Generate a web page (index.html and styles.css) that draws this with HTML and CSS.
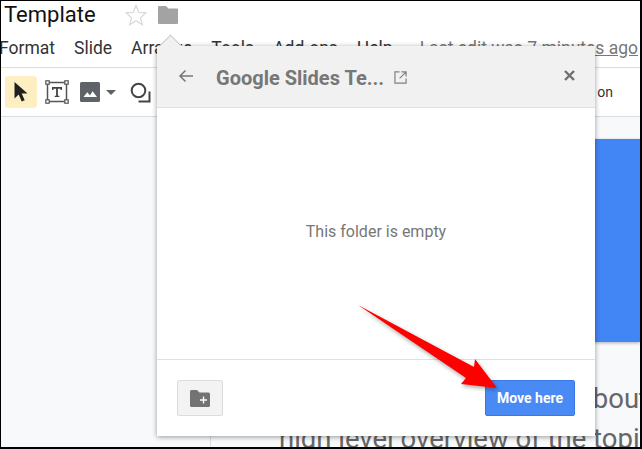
FILE: index.html
```html
<!DOCTYPE html>
<html lang="en">
<head>
    <meta charset="UTF-8">
    <title>Template</title>
    <link rel="stylesheet" href="styles.css">
</head>
<body>
    <div class="app">
        <div class="title-row">
            <span class="doc-title">Template</span>
            <svg class="star" width="24" height="24" viewBox="0 0 24 24"><path d="M12 2.500l2.800 6.900 7.200.5-5.500 4.700 1.800 7.200-6.300-4-6.300 4 1.800-7.200L2 9.900l7.200-.5z" fill="none" stroke="#dadada" stroke-width="1.300"/></svg>
            <svg class="folder" width="20" height="18" viewBox="0 0 20 18"><path d="M0 1a1 1 0 0 1 1-1h7l2.500 2.500H19a1 1 0 0 1 1 1V17a1 1 0 0 1-1 1H1a1 1 0 0 1-1-1z" fill="#a3a3a3"/></svg>
        </div>
        <div class="menu-row">
            <span>Format</span>
            <span>Slide</span>
            <span>Arrange</span>
            <span>Tools</span>
            <span>Add-ons</span>
            <span>Help</span>
            <span class="last-edit">Last edit was 7 minutes ago</span>
        </div>
        <div class="toolbar">
            <div class="tool-active">
                <svg width="16" height="22" viewBox="0 0 16 22"><path d="M1.500 1v16.500l4.200-4 3 7 3-1.300-3-6.700h5.800z" fill="#202020"/></svg>
            </div>
            <svg class="tool-text" width="24" height="24" viewBox="0 0 24 24"><rect x="2.500" y="2.500" width="19" height="19" fill="none" stroke="#555" stroke-width="1.500"/><path d="M7 7h10v3h-1.500V8.700h-2.600v7h1.400V17H9.700v-1.300h1.400v-7H8.500V10H7z" fill="#444"/><g fill="#fff" stroke="#555" stroke-width="1.200"><rect x=".8" y=".8" width="3.400" height="3.400"/><rect x="19.800" y=".8" width="3.400" height="3.400"/><rect x=".8" y="19.800" width="3.400" height="3.400"/><rect x="19.800" y="19.800" width="3.400" height="3.400"/></g></svg>
            <svg class="tool-image" width="20" height="20" viewBox="0 0 20 20"><path d="M1.500 0h17A1.500 1.500 0 0 1 20 1.500v17a1.500 1.500 0 0 1-1.500 1.500h-17A1.500 1.500 0 0 1 0 18.500v-17A1.500 1.500 0 0 1 1.500 0z" fill="#5f6368"/><path d="M3.500 15l3.800-4.800 2.700 3.200 2.600-4.100 4.400 5.700z" fill="#fff"/></svg>
            <svg class="tool-caret" width="10" height="5" viewBox="0 0 10 5"><path d="M0 0h10L5 5z" fill="#5f6368"/></svg>
            <svg class="tool-shape" width="21" height="21" viewBox="0 0 21 21"><circle cx="8.500" cy="8.500" r="6.800" fill="none" stroke="#444" stroke-width="2"/><path d="M19.500 9.500V19.500H8.500" fill="none" stroke="#444" stroke-width="2"/></svg>
            <span class="tool-label">on</span>
        </div>
        <div class="workspace">
            <div class="filmstrip"></div>
            <div class="canvas">
                <div class="slide-banner"></div>
                <p class="slide-text">This Presentation walks about<br>high level overview of the topic</p>
            </div>
        </div>
    </div>

    <div class="popover">
        <div class="pop-head">
            <svg class="pop-back" width="16" height="14" viewBox="0 0 16 14"><path d="M15 7H2M7.500 1.500L2 7l5.500 5.500" fill="none" stroke="#777" stroke-width="1.500"/></svg>
            <span class="pop-title">Google Slides Te...</span>
            <svg class="pop-open" width="13" height="13" viewBox="0 0 14 14"><path d="M6 1H1v12h12V8M8 1h5v5M13 1L6 8" fill="none" stroke="#808080" stroke-width="1.300"/></svg>
            <svg class="pop-close" width="11" height="11" viewBox="0 0 11 11"><path d="M1 1l9 9M10 1l-9 9" stroke="#6f6f6f" stroke-width="2.400"/></svg>
        </div>
        <div class="pop-body">This folder is empty</div>
        <div class="pop-foot">
            <button class="btn-folder">
                <svg width="20" height="17" viewBox="0 0 20 17"><path d="M0 1.500A1.500 1.500 0 0 1 1.500 0H7l2.500 2.500h9A1.500 1.500 0 0 1 20 4v11.500a1.500 1.500 0 0 1-1.500 1.500h-17A1.500 1.500 0 0 1 0 15.500z" fill="#737373"/><path d="M13.500 6.500v7M10 10h7" stroke="#fff" stroke-width="1.300"/></svg>
            </button>
            <button class="btn-move">Move here</button>
        </div>
    </div>

    <svg class="arrow" width="140" height="84" viewBox="0 0 140 84"><path d="M0 0L116 62 117 54 139 83 103 79 108 73z" fill="#f00"/></svg>
</body>
</html>
```

FILE: styles.css
```css
* {
    box-sizing: border-box;
}

body {
    margin: 0;
    width: 642px;
    height: 449px;
    overflow: hidden;
    position: relative;
    background: #fff;
    font-family: Roboto, "Liberation Sans", sans-serif;
}

.app {
    height: 449px;
    border: 1px solid #000;
    border-width: 1px 2px 2px 1px;
    display: flex;
    flex-direction: column;
    overflow: hidden;
}

/* Title row */
.title-row {
    height: 27px;
    display: flex;
    align-items: center;
    padding-left: 3px;
    color: #111;
}

.doc-title {
    font-size: 22px;
    width: 120px;
}

.star {
    margin-right: 10px;
}

/* Menu row */
.menu-row {
    height: 40px;
    margin-left: -2px;
    display: flex;
    align-items: center;
    gap: 19px;
    font-size: 17.500px;
    color: #333;
    white-space: nowrap;
    border-bottom: 1px solid #dadce0;
}

.last-edit {
    margin-left: 8px;
    color: #777;
    text-decoration: underline;
}

/* Toolbar */
.toolbar {
    height: 49px;
    display: flex;
    align-items: center;
    padding-left: 4px;
    border-bottom: 1px solid #dadce0;
    position: relative;
}

.tool-active {
    width: 32px;
    height: 32px;
    border-radius: 3px;
    background: #feefc3;
    display: flex;
    align-items: center;
    justify-content: center;
}

.tool-text {
    margin-left: 8px;
}

.tool-image {
    margin-left: 11px;
}

.tool-caret {
    margin-left: 6px;
}

.tool-shape {
    margin-left: 14px;
}

.tool-label {
    margin-left: auto;
    margin-right: 27px;
    font-size: 14px;
    color: #333;
}

/* Workspace */
.workspace {
    flex: 1;
    display: flex;
    background: #f8f9fa;
    min-height: 0;
}

.filmstrip {
    width: 210px;
    border-right: 1px solid #dadce0;
}

.canvas {
    flex: 1;
    padding-top: 22px;
    overflow: hidden;
}

.slide-banner {
    height: 203px;
    background: #4285f4;
    box-shadow: 0 1px 3px rgba(0, 0, 0, 0.3);
}

.slide-text {
    margin: 37px 0 0 68px;
    font-size: 27.500px;
    line-height: 40px;
    white-space: nowrap;
    color: #666;
}

/* Popover */
.popover {
    position: absolute;
    left: 157px;
    top: 46px;
    width: 438px;
    height: 390px;
    background: #fff;
    display: flex;
    flex-direction: column;
    box-shadow: 0 1px 5px rgba(0, 0, 0, 0.4);
}

.popover::before {
    content: "";
    position: absolute;
    left: 5px;
    top: -8px;
    width: 16px;
    height: 16px;
    transform: rotate(45deg);
    background: #f1f1f1;
    border: 1px solid #ccc;
    border-width: 1px 0 0 1px;
}

.pop-head {
    height: 62px;
    background: #f1f1f1;
    border-bottom: 1px solid #e0e0e0;
    display: flex;
    align-items: center;
    padding-left: 21px;
    position: relative;
}

.pop-back {
    margin-top: -2px;
}

.pop-title {
    margin-left: 22px;
    margin-top: 3px;
    font-size: 20px;
    font-weight: 700;
    color: #777;
    white-space: nowrap;
}

.pop-open {
    margin-left: 10px;
    margin-top: 2px;
}

.pop-close {
    margin-left: auto;
    margin-right: 20px;
    margin-top: -3px;
}

.pop-body {
    flex: 1;
    display: flex;
    align-items: center;
    justify-content: center;
    padding-bottom: 4px;
    font-size: 16px;
    color: #777;
}

.pop-foot {
    height: 77px;
    border-top: 1px solid #e0e0e0;
    display: flex;
    justify-content: space-between;
    align-items: flex-start;
    padding: 20px 20px 0;
}

.btn-folder {
    width: 46px;
    height: 36px;
    padding: 0;
    display: flex;
    align-items: center;
    justify-content: center;
    background: #f3f3f3;
    border: 1px solid #dcdcdc;
    border-radius: 2px;
}

.btn-move {
    width: 90px;
    height: 36px;
    padding: 0;
    font-family: inherit;
    font-size: 14px;
    font-weight: 700;
    color: #fff;
    background: #4a8af4;
    border: 1px solid #3b78e7;
    border-radius: 2px;
}

/* Callout arrow drawn over the screenshot */
.arrow {
    position: absolute;
    left: 358px;
    top: 305px;
    overflow: visible;
    filter: drop-shadow(1px 2px 2px rgba(0, 0, 0, 0.35));
}
```
